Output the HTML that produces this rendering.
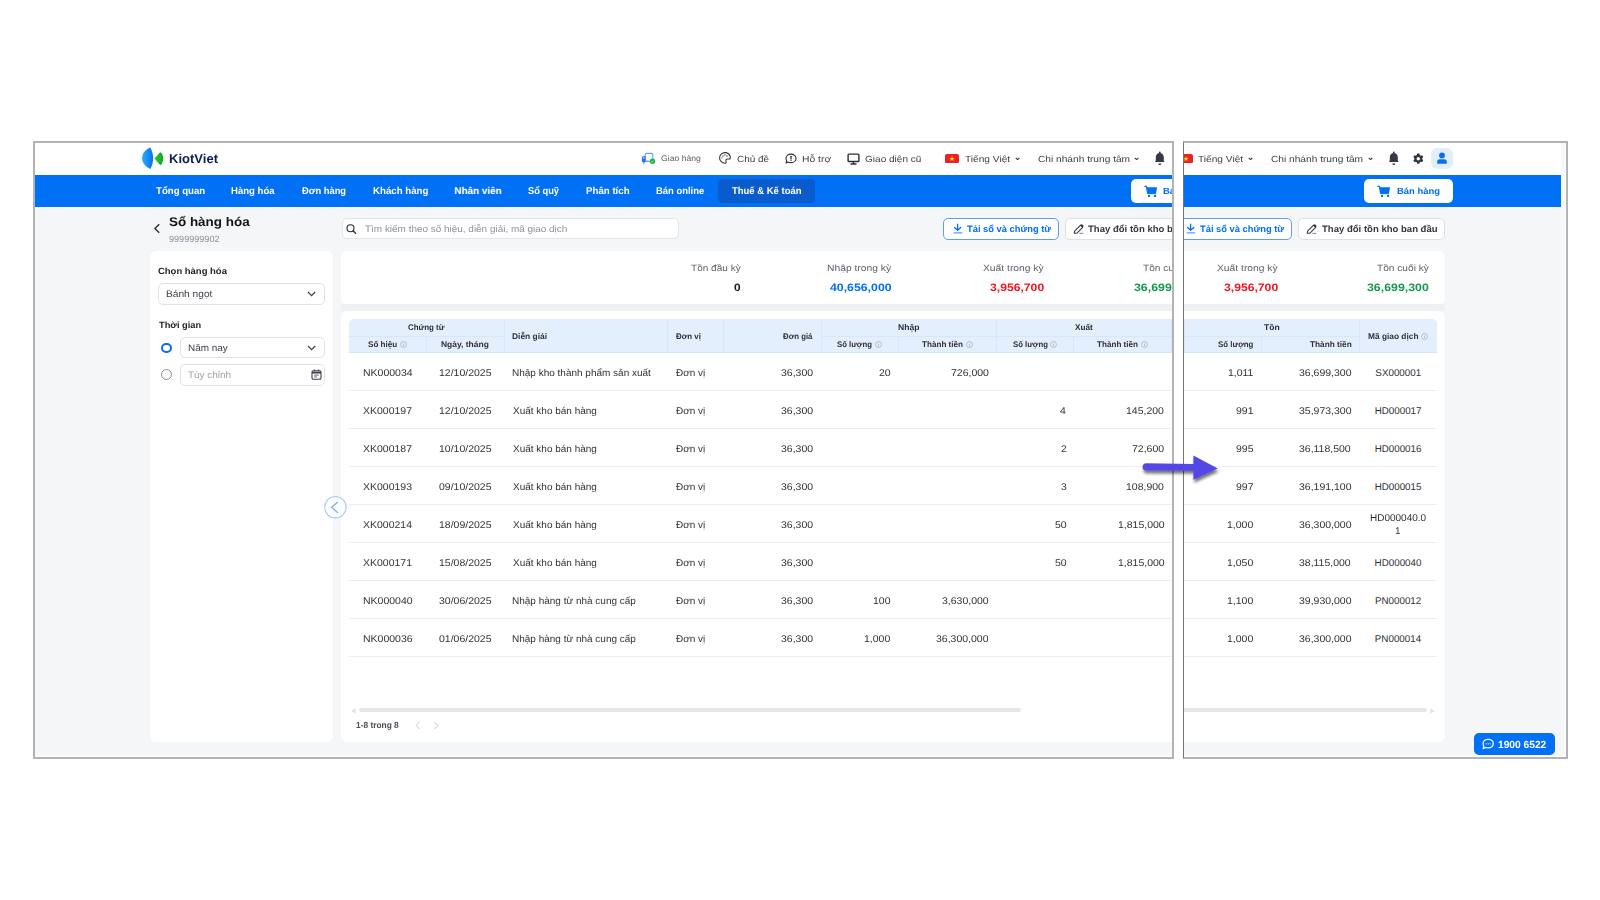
<!DOCTYPE html><html><head><meta charset="utf-8"><title>KiotViet</title><style>
*{margin:0;padding:0;box-sizing:content-box}
html,body{width:1600px;height:900px;overflow:hidden;background:#fff;font-family:"Liberation Sans", sans-serif;text-rendering:geometricPrecision}
.b{position:absolute}
.t{position:absolute;white-space:nowrap;transform-origin:0 0}
</style></head><body><div class="b" style="left:35px;top:143px;width:1137px;height:614px;overflow:hidden"><div class="b" style="left:-35px;top:-143px;width:1600px;height:900px"><div class="b" style="left:0.00px;top:143.00px;width:1340.00px;height:32.00px;background:#fff"></div><div class="b" style="left:0.00px;top:175.00px;width:1327.50px;height:32.00px;background:#0070f4"></div><div class="b" style="left:0.00px;top:207.00px;width:1340.00px;height:553.00px;background:#f5f6f8"></div><div class="b" style="left:1327.50px;top:143.00px;width:12.50px;height:617.00px;background:#f7f8fa"></div><svg class="b" style="left:136.00px;top:144.00px;" width="34" height="28" viewBox="0 0 34 28"><defs><linearGradient id="lgL" x1="0" y1="0" x2="1" y2="0"><stop offset="0" stop-color="#25b0f6"/><stop offset="1" stop-color="#0a6ff0"/></linearGradient><linearGradient id="lggL" x1="0" y1="0" x2="1" y2="0"><stop offset="0" stop-color="#2fd028"/><stop offset="1" stop-color="#0aa52c"/></linearGradient></defs><path d="M14.3 3.6 C9.2 5.6 6.1 9.8 6.1 14.3 C6.1 18.8 9.2 22.8 14.4 24.9 C16.4 21.2 17.1 17.8 17.1 14.3 C17.1 10.6 16.3 7.2 14.3 3.6 Z" fill="url(#lgL)"/><path d="M18.4 14.4 L23.6 8.7 Q24.6 7.7 25.5 8.9 C26.6 10.7 27.2 12.6 27.2 14.5 C27.2 16.5 26.6 18.5 25.5 20.3 Q24.6 21.5 23.6 20.4 Z" fill="url(#lggL)"/></svg><div class="t" style="left:169.15px;top:153.08px;font-size:12.9px;line-height:12.9px;color:#0c1f4f;font-weight:700;transform:scaleX(1.0111);">KiotViet</div><svg class="b" style="left:638.00px;top:150.00px;" width="22" height="18" viewBox="0 0 22 18"><rect x="7.2" y="3.4" width="7.6" height="8" rx="1.3" fill="none" stroke="#62a2f8" stroke-width="1.1"/><path d="M7.6 6.2H5.4C4.5 6.2 3.9 6.9 3.9 7.8V11.2C3.9 11.7 4.3 12 4.8 12H7.6Z" fill="#1f6ff2"/><rect x="4.9" y="7.2" width="1.6" height="1.4" fill="#b9d4fb"/><circle cx="5.8" cy="12.6" r="1.1" fill="#4f94f6"/><path d="M7.6 11.4H11" stroke="#62a2f8" stroke-width="1.1"/><circle cx="14.5" cy="11.3" r="2.7" fill="#1cb43c"/><path d="M13.4 11.4l0.8 0.8 1.4-1.5" stroke="#c8f0d0" stroke-width="0.8" fill="none"/></svg><div class="t" style="left:660.57px;top:154.56px;font-size:8.2px;line-height:8.2px;color:#5b6068;transform:scaleX(1.0569);">Giao hàng</div><svg class="b" style="left:718.60px;top:152.40px;" width="12" height="12" viewBox="0 0 12 12"><path d="M11 6.9 C11.4 5.9 11.3 4.8 11 4 C10.2 1.8 8.3 0.6 6 0.6 C3 0.6 0.6 3 0.6 5.9 C0.6 8.8 3 11.2 6 11.2 C6.9 11.2 7.3 10.6 7.1 9.9 L6.9 8.8 C6.8 7.8 7.3 6.9 8.3 6.9 Z" fill="none" stroke="#2b2f36" stroke-width="1.05" stroke-linejoin="round"/><circle cx="3.9" cy="4" r="0.65" fill="#2b2f36"/><circle cx="5.9" cy="2.9" r="0.65" fill="#2b2f36"/><circle cx="7.9" cy="4" r="0.65" fill="#2b2f36"/><circle cx="2.9" cy="5.8" r="0.55" fill="#2b2f36"/></svg><div class="t" style="left:736.50px;top:154.67px;font-size:8.9px;line-height:8.9px;color:#3a3f47;transform:scaleX(1.1218);">Chủ đề</div><svg class="b" style="left:784.60px;top:152.60px;" width="13" height="12" viewBox="0 0 13 12"><path d="M6 1.1 C8.9 1.1 11 3 11 5.4 C11 7.8 8.9 9.6 6 9.6 C5 9.6 4 9.4 3.2 9 L1 9.9 L1.7 7.8 C1.2 7.1 1 6.3 1 5.4 C1 3 3.1 1.1 6 1.1 Z" fill="none" stroke="#2b2f36" stroke-width="1.1" stroke-linejoin="round"/><path d="M6 3.3v2.5" stroke="#2b2f36" stroke-width="1.3" stroke-linecap="round"/><circle cx="6" cy="7.3" r="0.7" fill="#2b2f36"/></svg><div class="t" style="left:801.67px;top:154.67px;font-size:8.9px;line-height:8.9px;color:#3a3f47;transform:scaleX(1.1651);">Hỗ trợ</div><svg class="b" style="left:846.80px;top:152.60px;" width="13" height="12" viewBox="0 0 13 12"><rect x="1.1" y="1.1" width="10.8" height="7.4" rx="0.8" fill="none" stroke="#2b2f36" stroke-width="1.4"/><path d="M6.5 8.8v1.6M3.5 11h6" stroke="#2b2f36" stroke-width="1.4"/></svg><div class="t" style="left:865.10px;top:154.67px;font-size:8.9px;line-height:8.9px;color:#3a3f47;transform:scaleX(1.1318);">Giao diện cũ</div><svg class="b" style="left:945.00px;top:153.60px;" width="14" height="9.4" viewBox="0 0 14 9.4"><rect x="0" y="0" width="14" height="9.4" rx="2" fill="#e8222a"/><path d="M7 2.1l0.7 1.9h2l-1.6 1.2 0.6 1.9L7 6 5.3 7.1l0.6-1.9-1.6-1.2h2z" fill="#ffd400"/></svg><div class="t" style="left:964.80px;top:154.87px;font-size:8.9px;line-height:8.9px;color:#3a3f47;transform:scaleX(1.1439);">Tiếng Việt</div><svg class="b" style="left:1014.70px;top:156.80px;" width="5.2" height="3.6" viewBox="0 0 5.2 3.6"><path d="M0.8 0.8L2.6 2.6l1.8-1.8" fill="none" stroke="#3a3f47" stroke-width="1.2"/></svg><div class="t" style="left:1037.89px;top:154.87px;font-size:8.9px;line-height:8.9px;color:#3a3f47;transform:scaleX(1.1449);">Chi nhánh trung tâm</div><svg class="b" style="left:1134.00px;top:156.80px;" width="5.2" height="3.6" viewBox="0 0 5.2 3.6"><path d="M0.8 0.8L2.6 2.6l1.8-1.8" fill="none" stroke="#3a3f47" stroke-width="1.2"/></svg><svg class="b" style="left:1154.00px;top:151.00px;" width="12" height="15" viewBox="0 0 12 15"><circle cx="5.8" cy="1.4" r="0.9" fill="#353a42"/><path d="M0.9 11.1 L1.8 9.8 V6.3 C1.8 3.7 3.5 2 5.8 2 C8.1 2 9.8 3.7 9.8 6.3 V9.8 L10.7 11.1 Z" fill="#353a42"/><path d="M4.3 12.4 A1.5 1.5 0 0 0 7.3 12.4 Z" fill="#353a42"/></svg><svg class="b" style="left:1179.20px;top:152.60px;" width="11" height="11.5" viewBox="0 0 11 11.5"><path d="M3.84 2.08 L4.22 0.61 L6.38 0.61 L6.76 2.08 L7.70 2.63 L9.16 2.22 L10.25 4.09 L9.16 5.16 L9.16 6.24 L10.25 7.31 L9.16 9.18 L7.70 8.77 L6.76 9.32 L6.38 10.79 L4.22 10.79 L3.84 9.32 L2.90 8.77 L1.44 9.18 L0.35 7.31 L1.44 6.24 L1.44 5.16 L0.35 4.09 L1.44 2.22 L2.90 2.63 Z" fill="#2f333a"/><circle cx="5.3" cy="5.7" r="1.7" fill="#fff"/></svg><div class="b" style="left:1197.50px;top:147.50px;width:21.50px;height:21.25px;background:#e3eefd;border-radius:6px"></div><svg class="b" style="left:1203.60px;top:152.00px;" width="10" height="12" viewBox="0 0 10 12"><circle cx="5" cy="3.4" r="2.9" fill="#0a6cf5"/><path d="M0.2 11.8 V9.6 C0.2 8.2 1.2 7.3 2.6 7.3 H7.4 C8.8 7.3 9.8 8.2 9.8 9.6 V11.8 Z" fill="#0a6cf5"/></svg><div class="t" style="left:155.50px;top:186.52px;font-size:9.9px;line-height:9.9px;color:#fff;font-weight:700;transform:scaleX(0.9760);">Tổng quan</div><div class="t" style="left:231.28px;top:186.52px;font-size:9.9px;line-height:9.9px;color:#fff;font-weight:700;transform:scaleX(0.9675);">Hàng hóa</div><div class="t" style="left:302.45px;top:186.52px;font-size:9.9px;line-height:9.9px;color:#fff;font-weight:700;transform:scaleX(0.9470);">Đơn hàng</div><div class="t" style="left:373.12px;top:186.52px;font-size:9.9px;line-height:9.9px;color:#fff;font-weight:700;transform:scaleX(0.9803);">Khách hàng</div><div class="t" style="left:454.36px;top:186.52px;font-size:9.9px;line-height:9.9px;color:#fff;font-weight:700;">Nhân viên</div><div class="t" style="left:528.47px;top:186.52px;font-size:9.9px;line-height:9.9px;color:#fff;font-weight:700;transform:scaleX(0.9427);">Sổ quỹ</div><div class="t" style="left:586.37px;top:186.52px;font-size:9.9px;line-height:9.9px;color:#fff;font-weight:700;transform:scaleX(0.9812);">Phân tích</div><div class="t" style="left:656.39px;top:186.52px;font-size:9.9px;line-height:9.9px;color:#fff;font-weight:700;transform:scaleX(0.9547);">Bán online</div><div class="b" style="left:718.00px;top:178.75px;width:96.75px;height:24.00px;background:#0a5bcc;border-radius:4px"></div><div class="t" style="left:731.91px;top:186.52px;font-size:9.9px;line-height:9.9px;color:#fff;font-weight:700;transform:scaleX(0.9594);">Thuế &amp; Kế toán</div><div class="b" style="left:1130.70px;top:178.75px;width:88.55px;height:24.25px;background:#fff;border-radius:5px"></div><svg class="b" style="left:1143.50px;top:184.50px;" width="14" height="13" viewBox="0 0 14 13"><path d="M0.9 1.3 Q1.9 0.8 2.5 1.8 L3.7 8.4" fill="none" stroke="#0070f4" stroke-width="1.3" stroke-linecap="round"/><path d="M2.8 2.3 H12.9 V3.2 L12.1 8 H3.7 Z" fill="#0070f4"/><path d="M3.7 8.6 H12" stroke="#0070f4" stroke-width="1.1"/><circle cx="5" cy="10.9" r="1.2" fill="#0070f4"/><circle cx="11.1" cy="10.9" r="1.2" fill="#0070f4"/></svg><div class="t" style="left:1163.38px;top:187.27px;font-size:8.9px;line-height:8.9px;color:#0070f4;font-weight:700;transform:scaleX(1.0665);">Bán hàng</div><svg class="b" style="left:153.00px;top:222.50px;" width="8" height="11" viewBox="0 0 8 11"><path d="M6.2 1.2L1.9 5.5 6.2 9.8" fill="none" stroke="#2b2f36" stroke-width="1.4"/></svg><div class="t" style="left:168.90px;top:216.33px;font-size:12.6px;line-height:12.6px;color:#111418;font-weight:700;transform:scaleX(1.0670);">Sổ hàng hóa</div><div class="t" style="left:168.99px;top:234.78px;font-size:9.0px;line-height:9.0px;color:#8a8f97;transform:scaleX(1.0084);">9999999902</div><div class="b" style="left:341.50px;top:218.25px;width:337.25px;height:20.75px;background:#fff;border:1px solid #e1e4e8;border-radius:5px;box-sizing:border-box"></div><svg class="b" style="left:346.00px;top:224.00px;" width="11" height="10" viewBox="0 0 11 10"><circle cx="4.5" cy="4.2" r="3.5" fill="none" stroke="#2b2f36" stroke-width="1.15"/><path d="M7.1 6.8l2.5 2.5" stroke="#2b2f36" stroke-width="1.3" stroke-linecap="round"/></svg><div class="t" style="left:365.20px;top:224.14px;font-size:9.4px;line-height:9.4px;color:#8d929a;transform:scaleX(1.0607);">Tìm kiếm theo số hiệu, diễn giải, mã giao dịch</div><div class="b" style="left:943.20px;top:218.00px;width:115.80px;height:21.70px;background:#fff;border:1px solid #5c9ef7;border-radius:5px;box-sizing:border-box"></div><svg class="b" style="left:952.50px;top:223.00px;" width="10" height="11" viewBox="0 0 10 11"><path d="M4.6 1.2V7M1.6 4.4L4.6 7.2 7.8 4.4" fill="none" stroke="#0070f4" stroke-width="1.3" stroke-linecap="round" stroke-linejoin="round"/><path d="M1 9.8H8.8" stroke="#5d9cf6" stroke-width="1.2" stroke-linecap="round"/></svg><div class="t" style="left:966.61px;top:225.03px;font-size:9.3px;line-height:9.3px;color:#0070f4;font-weight:700;transform:scaleX(1.0041);">Tải sổ và chứng từ</div><div class="b" style="left:1064.60px;top:218.00px;width:146.80px;height:21.70px;background:#fff;border:1px solid #dde0e4;border-radius:5px;box-sizing:border-box"></div><svg class="b" style="left:1072.50px;top:223.50px;" width="11.5" height="10.5" viewBox="0 0 11.5 10.5"><path d="M1.2 9.3 L1.6 7.2 L7.6 1.2 L9.7 3.3 L3.7 9.3 Z" fill="none" stroke="#3a3f47" stroke-width="1.1" stroke-linejoin="round"/><path d="M7.4 1.4 L8.3 0.6 Q8.9 0.1 9.5 0.7 L10.3 1.5 Q10.8 2.1 10.2 2.7 L9.5 3.5 Z" fill="#2b3038"/><path d="M6.4 9.4 H10.4" stroke="#8a8f96" stroke-width="1.1"/></svg><div class="t" style="left:1088.20px;top:225.03px;font-size:9.3px;line-height:9.3px;color:#33373d;font-weight:700;transform:scaleX(1.0266);">Thay đổi tồn kho ban đầu</div><div class="b" style="left:150.00px;top:250.50px;width:182.50px;height:491.10px;background:#fff;border-radius:6px"></div><div class="t" style="left:158.02px;top:267.48px;font-size:9.0px;line-height:9.0px;color:#1c2026;font-weight:700;transform:scaleX(1.0521);">Chọn hàng hóa</div><div class="b" style="left:158.00px;top:283.00px;width:166.60px;height:21.50px;background:#fff;border:1px solid #dfe2e6;border-radius:5px;box-sizing:border-box"></div><div class="t" style="left:166.19px;top:290.07px;font-size:9.6px;line-height:9.6px;color:#3a3f47;transform:scaleX(1.0603);">Bánh ngọt</div><svg class="b" style="left:306.50px;top:290.50px;" width="9" height="6" viewBox="0 0 9 6"><path d="M1 1l3.6 3.6L8.2 1" fill="none" stroke="#3a3f47" stroke-width="1.2"/></svg><div class="t" style="left:158.66px;top:321.48px;font-size:9.0px;line-height:9.0px;color:#1c2026;font-weight:700;transform:scaleX(1.0304);">Thời gian</div><div class="b" style="left:161.00px;top:342.60px;width:10.80px;height:10.80px;border:2.6px solid #0a6cf2;border-radius:50%;box-sizing:border-box;background:#fff"></div><div class="b" style="left:180.25px;top:337.25px;width:144.35px;height:20.85px;background:#fff;border:1px solid #dfe2e6;border-radius:5px;box-sizing:border-box"></div><div class="t" style="left:187.95px;top:344.07px;font-size:9.6px;line-height:9.6px;color:#3a3f47;transform:scaleX(1.0364);">Năm nay</div><svg class="b" style="left:306.50px;top:344.80px;" width="9" height="6" viewBox="0 0 9 6"><path d="M1 1l3.6 3.6L8.2 1" fill="none" stroke="#3a3f47" stroke-width="1.2"/></svg><div class="b" style="left:161.00px;top:369.00px;width:11.00px;height:11.00px;border:1px solid #8a8f97;border-radius:50%;box-sizing:border-box;background:#fff"></div><div class="b" style="left:180.25px;top:364.40px;width:144.35px;height:21.20px;background:#fff;border:1px solid #dfe2e6;border-radius:5px;box-sizing:border-box"></div><div class="t" style="left:187.80px;top:371.17px;font-size:9.6px;line-height:9.6px;color:#9da2a9;transform:scaleX(1.0343);">Tùy chỉnh</div><svg class="b" style="left:310.50px;top:369.30px;" width="11" height="11" viewBox="0 0 11 11"><rect x="1" y="1.7" width="9" height="8.6" rx="1.3" fill="none" stroke="#3a3f47" stroke-width="1.1"/><path d="M1 3.6h9" stroke="#3a3f47" stroke-width="1.8"/><path d="M3.4 0.6v1.6M7.6 0.6v1.6" stroke="#3a3f47" stroke-width="1"/><path d="M3.2 6.1h4.6M3.2 7.9h2.6" stroke="#3a3f47" stroke-width="0.8"/></svg><div class="b" style="left:341.00px;top:250.50px;width:870.30px;height:53.70px;background:#fff;border-radius:6px"></div><div class="t" style="left:690.50px;top:263.60px;font-size:9.1px;line-height:9.1px;color:#5d626a;transform:scaleX(1.1045);">Tồn đầu kỳ</div><div class="t" style="left:734.08px;top:282.86px;font-size:10.8px;line-height:10.8px;color:#15181d;font-weight:700;transform:scaleX(1.1000);">0</div><div class="t" style="left:827.38px;top:263.60px;font-size:9.1px;line-height:9.1px;color:#5d626a;transform:scaleX(1.1320);">Nhập trong kỳ</div><div class="t" style="left:830.42px;top:282.86px;font-size:10.8px;line-height:10.8px;color:#0070f4;font-weight:700;transform:scaleX(1.1392);">40,656,000</div><div class="t" style="left:983.04px;top:263.60px;font-size:9.1px;line-height:9.1px;color:#5d626a;transform:scaleX(1.1317);">Xuất trong kỳ</div><div class="t" style="left:990.00px;top:282.86px;font-size:10.8px;line-height:10.8px;color:#f5121f;font-weight:700;transform:scaleX(1.1276);">3,956,700</div><div class="t" style="left:1143.30px;top:263.60px;font-size:9.1px;line-height:9.1px;color:#5d626a;transform:scaleX(1.1151);">Tồn cuối kỳ</div><div class="t" style="left:1133.89px;top:282.86px;font-size:10.8px;line-height:10.8px;color:#13994a;font-weight:700;transform:scaleX(1.1433);">36,699,300</div><div class="b" style="left:341.00px;top:304.20px;width:870.30px;height:7.05px;background:#eff0f2"></div><div class="b" style="left:341.00px;top:311.25px;width:870.30px;height:430.35px;background:#fff;border-radius:6px"></div><div class="b" style="left:349px;top:311px;width:854.5px;height:380px;overflow:hidden"><div class="b" style="left:-349px;top:-311px;width:2000px;height:900px"><div class="b" style="left:349.00px;top:319.20px;width:1075.50px;height:33.40px;background:#e3effd;border-radius:5px 5px 0 0"></div><div class="b" style="left:349.00px;top:351.90px;width:1075.50px;height:1.00px;background:#d3e4fb"></div><div class="b" style="left:349.00px;top:335.80px;width:155.40px;height:0.80px;background:#d6e6fb"></div><div class="b" style="left:821.20px;top:335.80px;width:175.40px;height:0.80px;background:#d6e6fb"></div><div class="b" style="left:996.60px;top:335.80px;width:174.90px;height:0.80px;background:#d6e6fb"></div><div class="b" style="left:1171.50px;top:335.80px;width:175.50px;height:0.80px;background:#d6e6fb"></div><div class="b" style="left:504.00px;top:319.20px;width:0.80px;height:33.40px;background:#d6e6fb"></div><div class="b" style="left:667.10px;top:319.20px;width:0.80px;height:33.40px;background:#d6e6fb"></div><div class="b" style="left:723.10px;top:319.20px;width:0.80px;height:33.40px;background:#d6e6fb"></div><div class="b" style="left:820.80px;top:319.20px;width:0.80px;height:33.40px;background:#d6e6fb"></div><div class="b" style="left:996.20px;top:319.20px;width:0.80px;height:33.40px;background:#d6e6fb"></div><div class="b" style="left:1171.10px;top:319.20px;width:0.80px;height:33.40px;background:#d6e6fb"></div><div class="b" style="left:1346.60px;top:319.20px;width:0.80px;height:33.40px;background:#d6e6fb"></div><div class="b" style="left:425.85px;top:336.00px;width:0.80px;height:16.60px;background:#d6e6fb"></div><div class="b" style="left:897.90px;top:336.00px;width:0.80px;height:16.60px;background:#d6e6fb"></div><div class="b" style="left:1073.00px;top:336.00px;width:0.80px;height:16.60px;background:#d6e6fb"></div><div class="b" style="left:1248.50px;top:336.00px;width:0.80px;height:16.60px;background:#d6e6fb"></div><div class="t" style="left:408.28px;top:324.26px;font-size:8.2px;line-height:8.2px;color:#2c3037;font-weight:700;transform:scaleX(0.9649);">Chứng từ</div><div class="t" style="left:368.13px;top:341.26px;font-size:8.2px;line-height:8.2px;color:#2c3037;font-weight:700;transform:scaleX(0.9888);">Số hiệu</div><svg class="b" style="left:399.88px;top:341.10px;" width="7" height="7" viewBox="0 0 7 7"><circle cx="3.5" cy="3.5" r="3" fill="none" stroke="#a9adb3" stroke-width="0.75"/><path d="M3.5 3.1v2.1" stroke="#a9adb3" stroke-width="0.8"/><circle cx="3.5" cy="2" r="0.45" fill="#a9adb3"/></svg><div class="t" style="left:441.37px;top:341.26px;font-size:8.2px;line-height:8.2px;color:#2c3037;font-weight:700;transform:scaleX(1.0339);">Ngày, tháng</div><div class="t" style="left:512.25px;top:333.16px;font-size:8.2px;line-height:8.2px;color:#2c3037;font-weight:700;transform:scaleX(1.0276);">Diễn giải</div><div class="t" style="left:675.56px;top:333.16px;font-size:8.2px;line-height:8.2px;color:#2c3037;font-weight:700;transform:scaleX(0.9645);">Đơn vị</div><div class="t" style="left:782.96px;top:333.16px;font-size:8.2px;line-height:8.2px;color:#2c3037;font-weight:700;transform:scaleX(0.9555);">Đơn giá</div><div class="t" style="left:898.04px;top:324.26px;font-size:8.2px;line-height:8.2px;color:#2c3037;font-weight:700;transform:scaleX(1.0489);">Nhập</div><div class="t" style="left:837.42px;top:341.26px;font-size:8.2px;line-height:8.2px;color:#2c3037;font-weight:700;transform:scaleX(0.9490);">Số lượng</div><svg class="b" style="left:874.85px;top:341.10px;" width="7" height="7" viewBox="0 0 7 7"><circle cx="3.5" cy="3.5" r="3" fill="none" stroke="#a9adb3" stroke-width="0.75"/><path d="M3.5 3.1v2.1" stroke="#a9adb3" stroke-width="0.8"/><circle cx="3.5" cy="2" r="0.45" fill="#a9adb3"/></svg><div class="t" style="left:922.12px;top:341.26px;font-size:8.2px;line-height:8.2px;color:#2c3037;font-weight:700;transform:scaleX(0.9908);">Thành tiền</div><svg class="b" style="left:965.70px;top:341.10px;" width="7" height="7" viewBox="0 0 7 7"><circle cx="3.5" cy="3.5" r="3" fill="none" stroke="#a9adb3" stroke-width="0.75"/><path d="M3.5 3.1v2.1" stroke="#a9adb3" stroke-width="0.8"/><circle cx="3.5" cy="2" r="0.45" fill="#a9adb3"/></svg><div class="t" style="left:1075.12px;top:324.26px;font-size:8.2px;line-height:8.2px;color:#2c3037;font-weight:700;transform:scaleX(1.0063);">Xuất</div><div class="t" style="left:1012.67px;top:341.26px;font-size:8.2px;line-height:8.2px;color:#2c3037;font-weight:700;transform:scaleX(0.9490);">Số lượng</div><svg class="b" style="left:1050.10px;top:341.10px;" width="7" height="7" viewBox="0 0 7 7"><circle cx="3.5" cy="3.5" r="3" fill="none" stroke="#a9adb3" stroke-width="0.75"/><path d="M3.5 3.1v2.1" stroke="#a9adb3" stroke-width="0.8"/><circle cx="3.5" cy="2" r="0.45" fill="#a9adb3"/></svg><div class="t" style="left:1097.12px;top:341.26px;font-size:8.2px;line-height:8.2px;color:#2c3037;font-weight:700;transform:scaleX(0.9908);">Thành tiền</div><svg class="b" style="left:1140.70px;top:341.10px;" width="7" height="7" viewBox="0 0 7 7"><circle cx="3.5" cy="3.5" r="3" fill="none" stroke="#a9adb3" stroke-width="0.75"/><path d="M3.5 3.1v2.1" stroke="#a9adb3" stroke-width="0.8"/><circle cx="3.5" cy="2" r="0.45" fill="#a9adb3"/></svg><div class="t" style="left:1251.61px;top:324.26px;font-size:8.2px;line-height:8.2px;color:#2c3037;font-weight:700;transform:scaleX(1.0463);">Tồn</div><div class="t" style="left:1205.26px;top:341.26px;font-size:8.2px;line-height:8.2px;color:#2c3037;font-weight:700;transform:scaleX(0.9628);">Số lượng</div><div class="t" style="left:1297.02px;top:341.26px;font-size:8.2px;line-height:8.2px;color:#2c3037;font-weight:700;transform:scaleX(1.0079);">Thành tiền</div><div class="t" style="left:1355.46px;top:333.16px;font-size:8.2px;line-height:8.2px;color:#2c3037;font-weight:700;transform:scaleX(1.0180);">Mã giao dịch</div><svg class="b" style="left:1408.50px;top:333.00px;" width="7" height="7" viewBox="0 0 7 7"><circle cx="3.5" cy="3.5" r="3" fill="none" stroke="#a9adb3" stroke-width="0.75"/><path d="M3.5 3.1v2.1" stroke="#a9adb3" stroke-width="0.8"/><circle cx="3.5" cy="2" r="0.45" fill="#a9adb3"/></svg><div class="t" style="left:362.56px;top:368.50px;font-size:9.8px;line-height:9.8px;color:#2e3238;transform:scaleX(1.0700);">NK000034</div><div class="t" style="left:438.90px;top:368.50px;font-size:9.8px;line-height:9.8px;color:#2e3238;transform:scaleX(1.0700);">12/10/2025</div><div class="t" style="left:512.30px;top:368.50px;font-size:9.8px;line-height:9.8px;color:#2e3238;transform:scaleX(1.0200);">Nhập kho thành phẩm sản xuất</div><div class="t" style="left:675.55px;top:368.50px;font-size:9.8px;line-height:9.8px;color:#2e3238;transform:scaleX(1.0200);">Đơn vị</div><div class="t" style="left:781.48px;top:368.50px;font-size:9.8px;line-height:9.8px;color:#2e3238;transform:scaleX(1.0700);">36,300</div><div class="t" style="left:878.93px;top:368.50px;font-size:9.8px;line-height:9.8px;color:#2e3238;transform:scaleX(1.0700);">20</div><div class="t" style="left:950.96px;top:368.50px;font-size:9.8px;line-height:9.8px;color:#2e3238;transform:scaleX(1.0700);">726,000</div><div class="t" style="left:1215.24px;top:368.50px;font-size:9.8px;line-height:9.8px;color:#2e3238;transform:scaleX(1.0700);">1,011</div><div class="t" style="left:1286.18px;top:368.50px;font-size:9.8px;line-height:9.8px;color:#2e3238;transform:scaleX(1.0700);">36,699,300</div><div class="t" style="left:1362.87px;top:368.50px;font-size:9.8px;line-height:9.8px;color:#2e3238;">SX000001</div><div class="b" style="left:349.00px;top:390.40px;width:1075.50px;height:1.00px;background:#eceef1"></div><div class="t" style="left:363.27px;top:406.50px;font-size:9.8px;line-height:9.8px;color:#2e3238;transform:scaleX(1.0700);">XK000197</div><div class="t" style="left:438.90px;top:406.50px;font-size:9.8px;line-height:9.8px;color:#2e3238;transform:scaleX(1.0700);">12/10/2025</div><div class="t" style="left:512.85px;top:406.50px;font-size:9.8px;line-height:9.8px;color:#2e3238;transform:scaleX(1.0200);">Xuất kho bán hàng</div><div class="t" style="left:675.55px;top:406.50px;font-size:9.8px;line-height:9.8px;color:#2e3238;transform:scaleX(1.0200);">Đơn vị</div><div class="t" style="left:781.48px;top:406.50px;font-size:9.8px;line-height:9.8px;color:#2e3238;transform:scaleX(1.0700);">36,300</div><div class="t" style="left:1060.44px;top:406.50px;font-size:9.8px;line-height:9.8px;color:#2e3238;transform:scaleX(1.0700);">4</div><div class="t" style="left:1126.46px;top:406.50px;font-size:9.8px;line-height:9.8px;color:#2e3238;transform:scaleX(1.0700);">145,200</div><div class="t" style="left:1223.21px;top:406.50px;font-size:9.8px;line-height:9.8px;color:#2e3238;transform:scaleX(1.0700);">991</div><div class="t" style="left:1286.18px;top:406.50px;font-size:9.8px;line-height:9.8px;color:#2e3238;transform:scaleX(1.0700);">35,973,300</div><div class="t" style="left:1362.18px;top:406.50px;font-size:9.8px;line-height:9.8px;color:#2e3238;">HD000017</div><div class="b" style="left:349.00px;top:428.40px;width:1075.50px;height:1.00px;background:#eceef1"></div><div class="t" style="left:363.27px;top:444.50px;font-size:9.8px;line-height:9.8px;color:#2e3238;transform:scaleX(1.0700);">XK000187</div><div class="t" style="left:438.90px;top:444.50px;font-size:9.8px;line-height:9.8px;color:#2e3238;transform:scaleX(1.0700);">10/10/2025</div><div class="t" style="left:512.85px;top:444.50px;font-size:9.8px;line-height:9.8px;color:#2e3238;transform:scaleX(1.0200);">Xuất kho bán hàng</div><div class="t" style="left:675.55px;top:444.50px;font-size:9.8px;line-height:9.8px;color:#2e3238;transform:scaleX(1.0200);">Đơn vị</div><div class="t" style="left:781.48px;top:444.50px;font-size:9.8px;line-height:9.8px;color:#2e3238;transform:scaleX(1.0700);">36,300</div><div class="t" style="left:1060.70px;top:444.50px;font-size:9.8px;line-height:9.8px;color:#2e3238;transform:scaleX(1.0700);">2</div><div class="t" style="left:1132.28px;top:444.50px;font-size:9.8px;line-height:9.8px;color:#2e3238;transform:scaleX(1.0700);">72,600</div><div class="t" style="left:1223.16px;top:444.50px;font-size:9.8px;line-height:9.8px;color:#2e3238;transform:scaleX(1.0700);">995</div><div class="t" style="left:1286.97px;top:444.50px;font-size:9.8px;line-height:9.8px;color:#2e3238;transform:scaleX(1.0700);">36,118,500</div><div class="t" style="left:1362.13px;top:444.50px;font-size:9.8px;line-height:9.8px;color:#2e3238;">HD000016</div><div class="b" style="left:349.00px;top:466.40px;width:1075.50px;height:1.00px;background:#eceef1"></div><div class="t" style="left:363.22px;top:482.50px;font-size:9.8px;line-height:9.8px;color:#2e3238;transform:scaleX(1.0700);">XK000193</div><div class="t" style="left:439.08px;top:482.50px;font-size:9.8px;line-height:9.8px;color:#2e3238;transform:scaleX(1.0700);">09/10/2025</div><div class="t" style="left:512.85px;top:482.50px;font-size:9.8px;line-height:9.8px;color:#2e3238;transform:scaleX(1.0200);">Xuất kho bán hàng</div><div class="t" style="left:675.55px;top:482.50px;font-size:9.8px;line-height:9.8px;color:#2e3238;transform:scaleX(1.0200);">Đơn vị</div><div class="t" style="left:781.48px;top:482.50px;font-size:9.8px;line-height:9.8px;color:#2e3238;transform:scaleX(1.0700);">36,300</div><div class="t" style="left:1060.60px;top:482.50px;font-size:9.8px;line-height:9.8px;color:#2e3238;transform:scaleX(1.0700);">3</div><div class="t" style="left:1126.46px;top:482.50px;font-size:9.8px;line-height:9.8px;color:#2e3238;transform:scaleX(1.0700);">108,900</div><div class="t" style="left:1223.27px;top:482.50px;font-size:9.8px;line-height:9.8px;color:#2e3238;transform:scaleX(1.0700);">997</div><div class="t" style="left:1286.18px;top:482.50px;font-size:9.8px;line-height:9.8px;color:#2e3238;transform:scaleX(1.0700);">36,191,100</div><div class="t" style="left:1362.13px;top:482.50px;font-size:9.8px;line-height:9.8px;color:#2e3238;">HD000015</div><div class="b" style="left:349.00px;top:504.40px;width:1075.50px;height:1.00px;background:#eceef1"></div><div class="t" style="left:363.14px;top:520.50px;font-size:9.8px;line-height:9.8px;color:#2e3238;transform:scaleX(1.0700);">XK000214</div><div class="t" style="left:438.90px;top:520.50px;font-size:9.8px;line-height:9.8px;color:#2e3238;transform:scaleX(1.0700);">18/09/2025</div><div class="t" style="left:512.85px;top:520.50px;font-size:9.8px;line-height:9.8px;color:#2e3238;transform:scaleX(1.0200);">Xuất kho bán hàng</div><div class="t" style="left:675.55px;top:520.50px;font-size:9.8px;line-height:9.8px;color:#2e3238;transform:scaleX(1.0200);">Đơn vị</div><div class="t" style="left:781.48px;top:520.50px;font-size:9.8px;line-height:9.8px;color:#2e3238;transform:scaleX(1.0700);">36,300</div><div class="t" style="left:1054.73px;top:520.50px;font-size:9.8px;line-height:9.8px;color:#2e3238;transform:scaleX(1.0700);">50</div><div class="t" style="left:1117.70px;top:520.50px;font-size:9.8px;line-height:9.8px;color:#2e3238;transform:scaleX(1.0700);">1,815,000</div><div class="t" style="left:1214.35px;top:520.50px;font-size:9.8px;line-height:9.8px;color:#2e3238;transform:scaleX(1.0700);">1,000</div><div class="t" style="left:1286.18px;top:520.50px;font-size:9.8px;line-height:9.8px;color:#2e3238;transform:scaleX(1.0700);">36,300,000</div><div class="t" style="left:1357.46px;top:513.70px;font-size:9.8px;line-height:9.8px;color:#2e3238;transform:scaleX(1.0200);">HD000040.0</div><div class="t" style="left:1382.83px;top:526.50px;font-size:9.8px;line-height:9.8px;color:#2e3238;transform:scaleX(1.0200);">1</div><div class="b" style="left:349.00px;top:542.40px;width:1075.50px;height:1.00px;background:#eceef1"></div><div class="t" style="left:363.25px;top:558.50px;font-size:9.8px;line-height:9.8px;color:#2e3238;transform:scaleX(1.0700);">XK000171</div><div class="t" style="left:438.90px;top:558.50px;font-size:9.8px;line-height:9.8px;color:#2e3238;transform:scaleX(1.0700);">15/08/2025</div><div class="t" style="left:512.85px;top:558.50px;font-size:9.8px;line-height:9.8px;color:#2e3238;transform:scaleX(1.0200);">Xuất kho bán hàng</div><div class="t" style="left:675.55px;top:558.50px;font-size:9.8px;line-height:9.8px;color:#2e3238;transform:scaleX(1.0200);">Đơn vị</div><div class="t" style="left:781.48px;top:558.50px;font-size:9.8px;line-height:9.8px;color:#2e3238;transform:scaleX(1.0700);">36,300</div><div class="t" style="left:1054.73px;top:558.50px;font-size:9.8px;line-height:9.8px;color:#2e3238;transform:scaleX(1.0700);">50</div><div class="t" style="left:1117.70px;top:558.50px;font-size:9.8px;line-height:9.8px;color:#2e3238;transform:scaleX(1.0700);">1,815,000</div><div class="t" style="left:1214.35px;top:558.50px;font-size:9.8px;line-height:9.8px;color:#2e3238;transform:scaleX(1.0700);">1,050</div><div class="t" style="left:1286.97px;top:558.50px;font-size:9.8px;line-height:9.8px;color:#2e3238;transform:scaleX(1.0700);">38,115,000</div><div class="t" style="left:1362.11px;top:558.50px;font-size:9.8px;line-height:9.8px;color:#2e3238;">HD000040</div><div class="b" style="left:349.00px;top:580.40px;width:1075.50px;height:1.00px;background:#eceef1"></div><div class="t" style="left:362.62px;top:596.50px;font-size:9.8px;line-height:9.8px;color:#2e3238;transform:scaleX(1.0700);">NK000040</div><div class="t" style="left:439.08px;top:596.50px;font-size:9.8px;line-height:9.8px;color:#2e3238;transform:scaleX(1.0700);">30/06/2025</div><div class="t" style="left:512.30px;top:596.50px;font-size:9.8px;line-height:9.8px;color:#2e3238;transform:scaleX(1.0200);">Nhập hàng từ nhà cung cấp</div><div class="t" style="left:675.55px;top:596.50px;font-size:9.8px;line-height:9.8px;color:#2e3238;transform:scaleX(1.0200);">Đơn vị</div><div class="t" style="left:781.48px;top:596.50px;font-size:9.8px;line-height:9.8px;color:#2e3238;transform:scaleX(1.0700);">36,300</div><div class="t" style="left:873.11px;top:596.50px;font-size:9.8px;line-height:9.8px;color:#2e3238;transform:scaleX(1.0700);">100</div><div class="t" style="left:942.20px;top:596.50px;font-size:9.8px;line-height:9.8px;color:#2e3238;transform:scaleX(1.0700);">3,630,000</div><div class="t" style="left:1214.35px;top:596.50px;font-size:9.8px;line-height:9.8px;color:#2e3238;transform:scaleX(1.0700);">1,100</div><div class="t" style="left:1286.18px;top:596.50px;font-size:9.8px;line-height:9.8px;color:#2e3238;transform:scaleX(1.0700);">39,930,000</div><div class="t" style="left:1362.45px;top:596.50px;font-size:9.8px;line-height:9.8px;color:#2e3238;">PN000012</div><div class="b" style="left:349.00px;top:618.40px;width:1075.50px;height:1.00px;background:#eceef1"></div><div class="t" style="left:362.64px;top:634.50px;font-size:9.8px;line-height:9.8px;color:#2e3238;transform:scaleX(1.0700);">NK000036</div><div class="t" style="left:439.08px;top:634.50px;font-size:9.8px;line-height:9.8px;color:#2e3238;transform:scaleX(1.0700);">01/06/2025</div><div class="t" style="left:512.30px;top:634.50px;font-size:9.8px;line-height:9.8px;color:#2e3238;transform:scaleX(1.0200);">Nhập hàng từ nhà cung cấp</div><div class="t" style="left:675.55px;top:634.50px;font-size:9.8px;line-height:9.8px;color:#2e3238;transform:scaleX(1.0200);">Đơn vị</div><div class="t" style="left:781.48px;top:634.50px;font-size:9.8px;line-height:9.8px;color:#2e3238;transform:scaleX(1.0700);">36,300</div><div class="t" style="left:864.35px;top:634.50px;font-size:9.8px;line-height:9.8px;color:#2e3238;transform:scaleX(1.0700);">1,000</div><div class="t" style="left:936.38px;top:634.50px;font-size:9.8px;line-height:9.8px;color:#2e3238;transform:scaleX(1.0700);">36,300,000</div><div class="t" style="left:1214.35px;top:634.50px;font-size:9.8px;line-height:9.8px;color:#2e3238;transform:scaleX(1.0700);">1,000</div><div class="t" style="left:1286.18px;top:634.50px;font-size:9.8px;line-height:9.8px;color:#2e3238;transform:scaleX(1.0700);">36,300,000</div><div class="t" style="left:1362.33px;top:634.50px;font-size:9.8px;line-height:9.8px;color:#2e3238;">PN000014</div><div class="b" style="left:349.00px;top:656.40px;width:1075.50px;height:1.00px;background:#eceef1"></div></div></div><svg class="b" style="left:351.00px;top:707.60px;" width="5" height="6" viewBox="0 0 5 6"><path d="M4.6 0.3v5.4L0.3 3z" fill="#dfe2e6"/></svg><svg class="b" style="left:1196.50px;top:707.60px;" width="5" height="6" viewBox="0 0 5 6"><path d="M0.4 0.3v5.4L4.7 3z" fill="#dfe2e6"/></svg><div class="b" style="left:359.00px;top:708.00px;width:662.00px;height:4.40px;background:#e4e6ea;border-radius:2.2px"></div><div class="t" style="left:355.50px;top:720.95px;font-size:8.8px;line-height:8.8px;color:#4a4f57;font-weight:700;transform:scaleX(0.9507);">1-8 trong 8</div><svg class="b" style="left:415.00px;top:720.50px;" width="6" height="9" viewBox="0 0 6 9"><path d="M4.5 1L1.2 4.5 4.5 8" fill="none" stroke="#c3c7cd" stroke-width="1"/></svg><svg class="b" style="left:432.60px;top:720.50px;" width="6" height="9" viewBox="0 0 6 9"><path d="M1.5 1l3.3 3.5L1.5 8" fill="none" stroke="#c3c7cd" stroke-width="1"/></svg><svg class="b" style="left:324.00px;top:495.50px;" width="23" height="23" viewBox="0 0 23 23"><circle cx="11.4" cy="11.2" r="10.7" fill="#fff" fill-opacity="0.55" stroke="#a6cbfa" stroke-width="1.1"/><path d="M13.8 6L7.6 11.3 13.8 16.7" fill="none" stroke="#79b0f8" stroke-width="1.3"/></svg><div class="b" style="left:1240.50px;top:733.20px;width:81.00px;height:21.60px;background:#0070f4;border-radius:5px"></div><svg class="b" style="left:1248.50px;top:738.00px;" width="12" height="12" viewBox="0 0 12 12"><path d="M6.2 1.3 C9.1 1.3 11.3 3.2 11.3 5.6 C11.3 8 9.1 9.9 6.2 9.9 C5.4 9.9 4.6 9.8 3.9 9.5 L1.1 10.6 L1.9 8.3 C1.3 7.6 1.1 6.6 1.1 5.6 C1.1 3.2 3.3 1.3 6.2 1.3 Z" fill="none" stroke="#fff" stroke-width="1.25" stroke-linejoin="round"/><circle cx="4.2" cy="5.8" r="0.65" fill="#fff"/><circle cx="6.2" cy="5.8" r="0.65" fill="#fff"/><circle cx="8.2" cy="5.8" r="0.65" fill="#fff"/></svg><div class="t" style="left:1264.39px;top:741.20px;font-size:10.4px;line-height:10.4px;color:#fff;font-weight:700;transform:scaleX(0.9834);">1900 6522</div></div></div><div class="b" style="left:35px;top:755.7px;width:1137px;height:1.3px;background:#fff"></div><div class="b" style="left:33px;top:141px;width:1137px;height:614px;border:2px solid #b3b3b3"></div><div class="b" style="left:1184px;top:143px;width:381px;height:614px;overflow:hidden"><div class="b" style="left:-950.5px;top:-143px;width:1600px;height:900px"><div class="b" style="left:0.00px;top:143.00px;width:1340.00px;height:32.00px;background:#fff"></div><div class="b" style="left:0.00px;top:175.00px;width:1327.50px;height:32.00px;background:#0070f4"></div><div class="b" style="left:0.00px;top:207.00px;width:1340.00px;height:553.00px;background:#f5f6f8"></div><div class="b" style="left:1327.50px;top:143.00px;width:12.50px;height:617.00px;background:#f7f8fa"></div><svg class="b" style="left:136.00px;top:144.00px;" width="34" height="28" viewBox="0 0 34 28"><defs><linearGradient id="lgR" x1="0" y1="0" x2="1" y2="0"><stop offset="0" stop-color="#25b0f6"/><stop offset="1" stop-color="#0a6ff0"/></linearGradient><linearGradient id="lggR" x1="0" y1="0" x2="1" y2="0"><stop offset="0" stop-color="#2fd028"/><stop offset="1" stop-color="#0aa52c"/></linearGradient></defs><path d="M14.3 3.6 C9.2 5.6 6.1 9.8 6.1 14.3 C6.1 18.8 9.2 22.8 14.4 24.9 C16.4 21.2 17.1 17.8 17.1 14.3 C17.1 10.6 16.3 7.2 14.3 3.6 Z" fill="url(#lgR)"/><path d="M18.4 14.4 L23.6 8.7 Q24.6 7.7 25.5 8.9 C26.6 10.7 27.2 12.6 27.2 14.5 C27.2 16.5 26.6 18.5 25.5 20.3 Q24.6 21.5 23.6 20.4 Z" fill="url(#lggR)"/></svg><div class="t" style="left:169.15px;top:153.08px;font-size:12.9px;line-height:12.9px;color:#0c1f4f;font-weight:700;transform:scaleX(1.0111);">KiotViet</div><svg class="b" style="left:638.00px;top:150.00px;" width="22" height="18" viewBox="0 0 22 18"><rect x="7.2" y="3.4" width="7.6" height="8" rx="1.3" fill="none" stroke="#62a2f8" stroke-width="1.1"/><path d="M7.6 6.2H5.4C4.5 6.2 3.9 6.9 3.9 7.8V11.2C3.9 11.7 4.3 12 4.8 12H7.6Z" fill="#1f6ff2"/><rect x="4.9" y="7.2" width="1.6" height="1.4" fill="#b9d4fb"/><circle cx="5.8" cy="12.6" r="1.1" fill="#4f94f6"/><path d="M7.6 11.4H11" stroke="#62a2f8" stroke-width="1.1"/><circle cx="14.5" cy="11.3" r="2.7" fill="#1cb43c"/><path d="M13.4 11.4l0.8 0.8 1.4-1.5" stroke="#c8f0d0" stroke-width="0.8" fill="none"/></svg><div class="t" style="left:660.57px;top:154.56px;font-size:8.2px;line-height:8.2px;color:#5b6068;transform:scaleX(1.0569);">Giao hàng</div><svg class="b" style="left:718.60px;top:152.40px;" width="12" height="12" viewBox="0 0 12 12"><path d="M11 6.9 C11.4 5.9 11.3 4.8 11 4 C10.2 1.8 8.3 0.6 6 0.6 C3 0.6 0.6 3 0.6 5.9 C0.6 8.8 3 11.2 6 11.2 C6.9 11.2 7.3 10.6 7.1 9.9 L6.9 8.8 C6.8 7.8 7.3 6.9 8.3 6.9 Z" fill="none" stroke="#2b2f36" stroke-width="1.05" stroke-linejoin="round"/><circle cx="3.9" cy="4" r="0.65" fill="#2b2f36"/><circle cx="5.9" cy="2.9" r="0.65" fill="#2b2f36"/><circle cx="7.9" cy="4" r="0.65" fill="#2b2f36"/><circle cx="2.9" cy="5.8" r="0.55" fill="#2b2f36"/></svg><div class="t" style="left:736.50px;top:154.67px;font-size:8.9px;line-height:8.9px;color:#3a3f47;transform:scaleX(1.1218);">Chủ đề</div><svg class="b" style="left:784.60px;top:152.60px;" width="13" height="12" viewBox="0 0 13 12"><path d="M6 1.1 C8.9 1.1 11 3 11 5.4 C11 7.8 8.9 9.6 6 9.6 C5 9.6 4 9.4 3.2 9 L1 9.9 L1.7 7.8 C1.2 7.1 1 6.3 1 5.4 C1 3 3.1 1.1 6 1.1 Z" fill="none" stroke="#2b2f36" stroke-width="1.1" stroke-linejoin="round"/><path d="M6 3.3v2.5" stroke="#2b2f36" stroke-width="1.3" stroke-linecap="round"/><circle cx="6" cy="7.3" r="0.7" fill="#2b2f36"/></svg><div class="t" style="left:801.67px;top:154.67px;font-size:8.9px;line-height:8.9px;color:#3a3f47;transform:scaleX(1.1651);">Hỗ trợ</div><svg class="b" style="left:846.80px;top:152.60px;" width="13" height="12" viewBox="0 0 13 12"><rect x="1.1" y="1.1" width="10.8" height="7.4" rx="0.8" fill="none" stroke="#2b2f36" stroke-width="1.4"/><path d="M6.5 8.8v1.6M3.5 11h6" stroke="#2b2f36" stroke-width="1.4"/></svg><div class="t" style="left:865.10px;top:154.67px;font-size:8.9px;line-height:8.9px;color:#3a3f47;transform:scaleX(1.1318);">Giao diện cũ</div><svg class="b" style="left:945.00px;top:153.60px;" width="14" height="9.4" viewBox="0 0 14 9.4"><rect x="0" y="0" width="14" height="9.4" rx="2" fill="#e8222a"/><path d="M7 2.1l0.7 1.9h2l-1.6 1.2 0.6 1.9L7 6 5.3 7.1l0.6-1.9-1.6-1.2h2z" fill="#ffd400"/></svg><div class="t" style="left:964.80px;top:154.87px;font-size:8.9px;line-height:8.9px;color:#3a3f47;transform:scaleX(1.1439);">Tiếng Việt</div><svg class="b" style="left:1014.70px;top:156.80px;" width="5.2" height="3.6" viewBox="0 0 5.2 3.6"><path d="M0.8 0.8L2.6 2.6l1.8-1.8" fill="none" stroke="#3a3f47" stroke-width="1.2"/></svg><div class="t" style="left:1037.89px;top:154.87px;font-size:8.9px;line-height:8.9px;color:#3a3f47;transform:scaleX(1.1449);">Chi nhánh trung tâm</div><svg class="b" style="left:1134.00px;top:156.80px;" width="5.2" height="3.6" viewBox="0 0 5.2 3.6"><path d="M0.8 0.8L2.6 2.6l1.8-1.8" fill="none" stroke="#3a3f47" stroke-width="1.2"/></svg><svg class="b" style="left:1154.00px;top:151.00px;" width="12" height="15" viewBox="0 0 12 15"><circle cx="5.8" cy="1.4" r="0.9" fill="#353a42"/><path d="M0.9 11.1 L1.8 9.8 V6.3 C1.8 3.7 3.5 2 5.8 2 C8.1 2 9.8 3.7 9.8 6.3 V9.8 L10.7 11.1 Z" fill="#353a42"/><path d="M4.3 12.4 A1.5 1.5 0 0 0 7.3 12.4 Z" fill="#353a42"/></svg><svg class="b" style="left:1179.20px;top:152.60px;" width="11" height="11.5" viewBox="0 0 11 11.5"><path d="M3.84 2.08 L4.22 0.61 L6.38 0.61 L6.76 2.08 L7.70 2.63 L9.16 2.22 L10.25 4.09 L9.16 5.16 L9.16 6.24 L10.25 7.31 L9.16 9.18 L7.70 8.77 L6.76 9.32 L6.38 10.79 L4.22 10.79 L3.84 9.32 L2.90 8.77 L1.44 9.18 L0.35 7.31 L1.44 6.24 L1.44 5.16 L0.35 4.09 L1.44 2.22 L2.90 2.63 Z" fill="#2f333a"/><circle cx="5.3" cy="5.7" r="1.7" fill="#fff"/></svg><div class="b" style="left:1197.50px;top:147.50px;width:21.50px;height:21.25px;background:#e3eefd;border-radius:6px"></div><svg class="b" style="left:1203.60px;top:152.00px;" width="10" height="12" viewBox="0 0 10 12"><circle cx="5" cy="3.4" r="2.9" fill="#0a6cf5"/><path d="M0.2 11.8 V9.6 C0.2 8.2 1.2 7.3 2.6 7.3 H7.4 C8.8 7.3 9.8 8.2 9.8 9.6 V11.8 Z" fill="#0a6cf5"/></svg><div class="t" style="left:155.50px;top:186.52px;font-size:9.9px;line-height:9.9px;color:#fff;font-weight:700;transform:scaleX(0.9760);">Tổng quan</div><div class="t" style="left:231.28px;top:186.52px;font-size:9.9px;line-height:9.9px;color:#fff;font-weight:700;transform:scaleX(0.9675);">Hàng hóa</div><div class="t" style="left:302.45px;top:186.52px;font-size:9.9px;line-height:9.9px;color:#fff;font-weight:700;transform:scaleX(0.9470);">Đơn hàng</div><div class="t" style="left:373.12px;top:186.52px;font-size:9.9px;line-height:9.9px;color:#fff;font-weight:700;transform:scaleX(0.9803);">Khách hàng</div><div class="t" style="left:454.36px;top:186.52px;font-size:9.9px;line-height:9.9px;color:#fff;font-weight:700;">Nhân viên</div><div class="t" style="left:528.47px;top:186.52px;font-size:9.9px;line-height:9.9px;color:#fff;font-weight:700;transform:scaleX(0.9427);">Sổ quỹ</div><div class="t" style="left:586.37px;top:186.52px;font-size:9.9px;line-height:9.9px;color:#fff;font-weight:700;transform:scaleX(0.9812);">Phân tích</div><div class="t" style="left:656.39px;top:186.52px;font-size:9.9px;line-height:9.9px;color:#fff;font-weight:700;transform:scaleX(0.9547);">Bán online</div><div class="b" style="left:718.00px;top:178.75px;width:96.75px;height:24.00px;background:#0a5bcc;border-radius:4px"></div><div class="t" style="left:731.91px;top:186.52px;font-size:9.9px;line-height:9.9px;color:#fff;font-weight:700;transform:scaleX(0.9594);">Thuế &amp; Kế toán</div><div class="b" style="left:1130.70px;top:178.75px;width:88.55px;height:24.25px;background:#fff;border-radius:5px"></div><svg class="b" style="left:1143.50px;top:184.50px;" width="14" height="13" viewBox="0 0 14 13"><path d="M0.9 1.3 Q1.9 0.8 2.5 1.8 L3.7 8.4" fill="none" stroke="#0070f4" stroke-width="1.3" stroke-linecap="round"/><path d="M2.8 2.3 H12.9 V3.2 L12.1 8 H3.7 Z" fill="#0070f4"/><path d="M3.7 8.6 H12" stroke="#0070f4" stroke-width="1.1"/><circle cx="5" cy="10.9" r="1.2" fill="#0070f4"/><circle cx="11.1" cy="10.9" r="1.2" fill="#0070f4"/></svg><div class="t" style="left:1163.38px;top:187.27px;font-size:8.9px;line-height:8.9px;color:#0070f4;font-weight:700;transform:scaleX(1.0665);">Bán hàng</div><svg class="b" style="left:153.00px;top:222.50px;" width="8" height="11" viewBox="0 0 8 11"><path d="M6.2 1.2L1.9 5.5 6.2 9.8" fill="none" stroke="#2b2f36" stroke-width="1.4"/></svg><div class="t" style="left:168.90px;top:216.33px;font-size:12.6px;line-height:12.6px;color:#111418;font-weight:700;transform:scaleX(1.0670);">Sổ hàng hóa</div><div class="t" style="left:168.99px;top:234.78px;font-size:9.0px;line-height:9.0px;color:#8a8f97;transform:scaleX(1.0084);">9999999902</div><div class="b" style="left:341.50px;top:218.25px;width:337.25px;height:20.75px;background:#fff;border:1px solid #e1e4e8;border-radius:5px;box-sizing:border-box"></div><svg class="b" style="left:346.00px;top:224.00px;" width="11" height="10" viewBox="0 0 11 10"><circle cx="4.5" cy="4.2" r="3.5" fill="none" stroke="#2b2f36" stroke-width="1.15"/><path d="M7.1 6.8l2.5 2.5" stroke="#2b2f36" stroke-width="1.3" stroke-linecap="round"/></svg><div class="t" style="left:365.20px;top:224.14px;font-size:9.4px;line-height:9.4px;color:#8d929a;transform:scaleX(1.0607);">Tìm kiếm theo số hiệu, diễn giải, mã giao dịch</div><div class="b" style="left:943.20px;top:218.00px;width:115.80px;height:21.70px;background:#fff;border:1px solid #5c9ef7;border-radius:5px;box-sizing:border-box"></div><svg class="b" style="left:952.50px;top:223.00px;" width="10" height="11" viewBox="0 0 10 11"><path d="M4.6 1.2V7M1.6 4.4L4.6 7.2 7.8 4.4" fill="none" stroke="#0070f4" stroke-width="1.3" stroke-linecap="round" stroke-linejoin="round"/><path d="M1 9.8H8.8" stroke="#5d9cf6" stroke-width="1.2" stroke-linecap="round"/></svg><div class="t" style="left:966.61px;top:225.03px;font-size:9.3px;line-height:9.3px;color:#0070f4;font-weight:700;transform:scaleX(1.0041);">Tải sổ và chứng từ</div><div class="b" style="left:1064.60px;top:218.00px;width:146.80px;height:21.70px;background:#fff;border:1px solid #dde0e4;border-radius:5px;box-sizing:border-box"></div><svg class="b" style="left:1072.50px;top:223.50px;" width="11.5" height="10.5" viewBox="0 0 11.5 10.5"><path d="M1.2 9.3 L1.6 7.2 L7.6 1.2 L9.7 3.3 L3.7 9.3 Z" fill="none" stroke="#3a3f47" stroke-width="1.1" stroke-linejoin="round"/><path d="M7.4 1.4 L8.3 0.6 Q8.9 0.1 9.5 0.7 L10.3 1.5 Q10.8 2.1 10.2 2.7 L9.5 3.5 Z" fill="#2b3038"/><path d="M6.4 9.4 H10.4" stroke="#8a8f96" stroke-width="1.1"/></svg><div class="t" style="left:1088.20px;top:225.03px;font-size:9.3px;line-height:9.3px;color:#33373d;font-weight:700;transform:scaleX(1.0266);">Thay đổi tồn kho ban đầu</div><div class="b" style="left:150.00px;top:250.50px;width:182.50px;height:491.10px;background:#fff;border-radius:6px"></div><div class="t" style="left:158.02px;top:267.48px;font-size:9.0px;line-height:9.0px;color:#1c2026;font-weight:700;transform:scaleX(1.0521);">Chọn hàng hóa</div><div class="b" style="left:158.00px;top:283.00px;width:166.60px;height:21.50px;background:#fff;border:1px solid #dfe2e6;border-radius:5px;box-sizing:border-box"></div><div class="t" style="left:166.19px;top:290.07px;font-size:9.6px;line-height:9.6px;color:#3a3f47;transform:scaleX(1.0603);">Bánh ngọt</div><svg class="b" style="left:306.50px;top:290.50px;" width="9" height="6" viewBox="0 0 9 6"><path d="M1 1l3.6 3.6L8.2 1" fill="none" stroke="#3a3f47" stroke-width="1.2"/></svg><div class="t" style="left:158.66px;top:321.48px;font-size:9.0px;line-height:9.0px;color:#1c2026;font-weight:700;transform:scaleX(1.0304);">Thời gian</div><div class="b" style="left:161.00px;top:342.60px;width:10.80px;height:10.80px;border:2.6px solid #0a6cf2;border-radius:50%;box-sizing:border-box;background:#fff"></div><div class="b" style="left:180.25px;top:337.25px;width:144.35px;height:20.85px;background:#fff;border:1px solid #dfe2e6;border-radius:5px;box-sizing:border-box"></div><div class="t" style="left:187.95px;top:344.07px;font-size:9.6px;line-height:9.6px;color:#3a3f47;transform:scaleX(1.0364);">Năm nay</div><svg class="b" style="left:306.50px;top:344.80px;" width="9" height="6" viewBox="0 0 9 6"><path d="M1 1l3.6 3.6L8.2 1" fill="none" stroke="#3a3f47" stroke-width="1.2"/></svg><div class="b" style="left:161.00px;top:369.00px;width:11.00px;height:11.00px;border:1px solid #8a8f97;border-radius:50%;box-sizing:border-box;background:#fff"></div><div class="b" style="left:180.25px;top:364.40px;width:144.35px;height:21.20px;background:#fff;border:1px solid #dfe2e6;border-radius:5px;box-sizing:border-box"></div><div class="t" style="left:187.80px;top:371.17px;font-size:9.6px;line-height:9.6px;color:#9da2a9;transform:scaleX(1.0343);">Tùy chỉnh</div><svg class="b" style="left:310.50px;top:369.30px;" width="11" height="11" viewBox="0 0 11 11"><rect x="1" y="1.7" width="9" height="8.6" rx="1.3" fill="none" stroke="#3a3f47" stroke-width="1.1"/><path d="M1 3.6h9" stroke="#3a3f47" stroke-width="1.8"/><path d="M3.4 0.6v1.6M7.6 0.6v1.6" stroke="#3a3f47" stroke-width="1"/><path d="M3.2 6.1h4.6M3.2 7.9h2.6" stroke="#3a3f47" stroke-width="0.8"/></svg><div class="b" style="left:341.00px;top:250.50px;width:870.30px;height:53.70px;background:#fff;border-radius:6px"></div><div class="t" style="left:690.50px;top:263.60px;font-size:9.1px;line-height:9.1px;color:#5d626a;transform:scaleX(1.1045);">Tồn đầu kỳ</div><div class="t" style="left:734.08px;top:282.86px;font-size:10.8px;line-height:10.8px;color:#15181d;font-weight:700;transform:scaleX(1.1000);">0</div><div class="t" style="left:827.38px;top:263.60px;font-size:9.1px;line-height:9.1px;color:#5d626a;transform:scaleX(1.1320);">Nhập trong kỳ</div><div class="t" style="left:830.42px;top:282.86px;font-size:10.8px;line-height:10.8px;color:#0070f4;font-weight:700;transform:scaleX(1.1392);">40,656,000</div><div class="t" style="left:983.04px;top:263.60px;font-size:9.1px;line-height:9.1px;color:#5d626a;transform:scaleX(1.1317);">Xuất trong kỳ</div><div class="t" style="left:990.00px;top:282.86px;font-size:10.8px;line-height:10.8px;color:#f5121f;font-weight:700;transform:scaleX(1.1276);">3,956,700</div><div class="t" style="left:1143.30px;top:263.60px;font-size:9.1px;line-height:9.1px;color:#5d626a;transform:scaleX(1.1151);">Tồn cuối kỳ</div><div class="t" style="left:1133.89px;top:282.86px;font-size:10.8px;line-height:10.8px;color:#13994a;font-weight:700;transform:scaleX(1.1433);">36,699,300</div><div class="b" style="left:341.00px;top:304.20px;width:870.30px;height:7.05px;background:#eff0f2"></div><div class="b" style="left:341.00px;top:311.25px;width:870.30px;height:430.35px;background:#fff;border-radius:6px"></div><div class="b" style="left:349px;top:311px;width:854.5px;height:380px;overflow:hidden"><div class="b" style="left:-349px;top:-311px;width:2000px;height:900px"><div class="b" style="left:128.00px;top:319.20px;width:1075.50px;height:33.40px;background:#e3effd;border-radius:5px 5px 0 0"></div><div class="b" style="left:128.00px;top:351.90px;width:1075.50px;height:1.00px;background:#d3e4fb"></div><div class="b" style="left:128.00px;top:335.80px;width:155.40px;height:0.80px;background:#d6e6fb"></div><div class="b" style="left:600.20px;top:335.80px;width:175.40px;height:0.80px;background:#d6e6fb"></div><div class="b" style="left:775.60px;top:335.80px;width:174.90px;height:0.80px;background:#d6e6fb"></div><div class="b" style="left:950.50px;top:335.80px;width:175.50px;height:0.80px;background:#d6e6fb"></div><div class="b" style="left:283.00px;top:319.20px;width:0.80px;height:33.40px;background:#d6e6fb"></div><div class="b" style="left:446.10px;top:319.20px;width:0.80px;height:33.40px;background:#d6e6fb"></div><div class="b" style="left:502.10px;top:319.20px;width:0.80px;height:33.40px;background:#d6e6fb"></div><div class="b" style="left:599.80px;top:319.20px;width:0.80px;height:33.40px;background:#d6e6fb"></div><div class="b" style="left:775.20px;top:319.20px;width:0.80px;height:33.40px;background:#d6e6fb"></div><div class="b" style="left:950.10px;top:319.20px;width:0.80px;height:33.40px;background:#d6e6fb"></div><div class="b" style="left:1125.60px;top:319.20px;width:0.80px;height:33.40px;background:#d6e6fb"></div><div class="b" style="left:204.85px;top:336.00px;width:0.80px;height:16.60px;background:#d6e6fb"></div><div class="b" style="left:676.90px;top:336.00px;width:0.80px;height:16.60px;background:#d6e6fb"></div><div class="b" style="left:852.00px;top:336.00px;width:0.80px;height:16.60px;background:#d6e6fb"></div><div class="b" style="left:1027.50px;top:336.00px;width:0.80px;height:16.60px;background:#d6e6fb"></div><div class="t" style="left:187.28px;top:324.26px;font-size:8.2px;line-height:8.2px;color:#2c3037;font-weight:700;transform:scaleX(0.9649);">Chứng từ</div><div class="t" style="left:147.13px;top:341.26px;font-size:8.2px;line-height:8.2px;color:#2c3037;font-weight:700;transform:scaleX(0.9888);">Số hiệu</div><svg class="b" style="left:178.88px;top:341.10px;" width="7" height="7" viewBox="0 0 7 7"><circle cx="3.5" cy="3.5" r="3" fill="none" stroke="#a9adb3" stroke-width="0.75"/><path d="M3.5 3.1v2.1" stroke="#a9adb3" stroke-width="0.8"/><circle cx="3.5" cy="2" r="0.45" fill="#a9adb3"/></svg><div class="t" style="left:220.37px;top:341.26px;font-size:8.2px;line-height:8.2px;color:#2c3037;font-weight:700;transform:scaleX(1.0339);">Ngày, tháng</div><div class="t" style="left:291.25px;top:333.16px;font-size:8.2px;line-height:8.2px;color:#2c3037;font-weight:700;transform:scaleX(1.0276);">Diễn giải</div><div class="t" style="left:454.56px;top:333.16px;font-size:8.2px;line-height:8.2px;color:#2c3037;font-weight:700;transform:scaleX(0.9645);">Đơn vị</div><div class="t" style="left:561.96px;top:333.16px;font-size:8.2px;line-height:8.2px;color:#2c3037;font-weight:700;transform:scaleX(0.9555);">Đơn giá</div><div class="t" style="left:677.04px;top:324.26px;font-size:8.2px;line-height:8.2px;color:#2c3037;font-weight:700;transform:scaleX(1.0489);">Nhập</div><div class="t" style="left:616.42px;top:341.26px;font-size:8.2px;line-height:8.2px;color:#2c3037;font-weight:700;transform:scaleX(0.9490);">Số lượng</div><svg class="b" style="left:653.85px;top:341.10px;" width="7" height="7" viewBox="0 0 7 7"><circle cx="3.5" cy="3.5" r="3" fill="none" stroke="#a9adb3" stroke-width="0.75"/><path d="M3.5 3.1v2.1" stroke="#a9adb3" stroke-width="0.8"/><circle cx="3.5" cy="2" r="0.45" fill="#a9adb3"/></svg><div class="t" style="left:701.12px;top:341.26px;font-size:8.2px;line-height:8.2px;color:#2c3037;font-weight:700;transform:scaleX(0.9908);">Thành tiền</div><svg class="b" style="left:744.70px;top:341.10px;" width="7" height="7" viewBox="0 0 7 7"><circle cx="3.5" cy="3.5" r="3" fill="none" stroke="#a9adb3" stroke-width="0.75"/><path d="M3.5 3.1v2.1" stroke="#a9adb3" stroke-width="0.8"/><circle cx="3.5" cy="2" r="0.45" fill="#a9adb3"/></svg><div class="t" style="left:854.12px;top:324.26px;font-size:8.2px;line-height:8.2px;color:#2c3037;font-weight:700;transform:scaleX(1.0063);">Xuất</div><div class="t" style="left:791.67px;top:341.26px;font-size:8.2px;line-height:8.2px;color:#2c3037;font-weight:700;transform:scaleX(0.9490);">Số lượng</div><svg class="b" style="left:829.10px;top:341.10px;" width="7" height="7" viewBox="0 0 7 7"><circle cx="3.5" cy="3.5" r="3" fill="none" stroke="#a9adb3" stroke-width="0.75"/><path d="M3.5 3.1v2.1" stroke="#a9adb3" stroke-width="0.8"/><circle cx="3.5" cy="2" r="0.45" fill="#a9adb3"/></svg><div class="t" style="left:876.12px;top:341.26px;font-size:8.2px;line-height:8.2px;color:#2c3037;font-weight:700;transform:scaleX(0.9908);">Thành tiền</div><svg class="b" style="left:919.70px;top:341.10px;" width="7" height="7" viewBox="0 0 7 7"><circle cx="3.5" cy="3.5" r="3" fill="none" stroke="#a9adb3" stroke-width="0.75"/><path d="M3.5 3.1v2.1" stroke="#a9adb3" stroke-width="0.8"/><circle cx="3.5" cy="2" r="0.45" fill="#a9adb3"/></svg><div class="t" style="left:1030.61px;top:324.26px;font-size:8.2px;line-height:8.2px;color:#2c3037;font-weight:700;transform:scaleX(1.0463);">Tồn</div><div class="t" style="left:984.26px;top:341.26px;font-size:8.2px;line-height:8.2px;color:#2c3037;font-weight:700;transform:scaleX(0.9628);">Số lượng</div><div class="t" style="left:1076.02px;top:341.26px;font-size:8.2px;line-height:8.2px;color:#2c3037;font-weight:700;transform:scaleX(1.0079);">Thành tiền</div><div class="t" style="left:1134.46px;top:333.16px;font-size:8.2px;line-height:8.2px;color:#2c3037;font-weight:700;transform:scaleX(1.0180);">Mã giao dịch</div><svg class="b" style="left:1187.50px;top:333.00px;" width="7" height="7" viewBox="0 0 7 7"><circle cx="3.5" cy="3.5" r="3" fill="none" stroke="#a9adb3" stroke-width="0.75"/><path d="M3.5 3.1v2.1" stroke="#a9adb3" stroke-width="0.8"/><circle cx="3.5" cy="2" r="0.45" fill="#a9adb3"/></svg><div class="t" style="left:141.56px;top:368.50px;font-size:9.8px;line-height:9.8px;color:#2e3238;transform:scaleX(1.0700);">NK000034</div><div class="t" style="left:217.90px;top:368.50px;font-size:9.8px;line-height:9.8px;color:#2e3238;transform:scaleX(1.0700);">12/10/2025</div><div class="t" style="left:291.30px;top:368.50px;font-size:9.8px;line-height:9.8px;color:#2e3238;transform:scaleX(1.0200);">Nhập kho thành phẩm sản xuất</div><div class="t" style="left:454.55px;top:368.50px;font-size:9.8px;line-height:9.8px;color:#2e3238;transform:scaleX(1.0200);">Đơn vị</div><div class="t" style="left:560.48px;top:368.50px;font-size:9.8px;line-height:9.8px;color:#2e3238;transform:scaleX(1.0700);">36,300</div><div class="t" style="left:657.93px;top:368.50px;font-size:9.8px;line-height:9.8px;color:#2e3238;transform:scaleX(1.0700);">20</div><div class="t" style="left:729.96px;top:368.50px;font-size:9.8px;line-height:9.8px;color:#2e3238;transform:scaleX(1.0700);">726,000</div><div class="t" style="left:994.24px;top:368.50px;font-size:9.8px;line-height:9.8px;color:#2e3238;transform:scaleX(1.0700);">1,011</div><div class="t" style="left:1065.18px;top:368.50px;font-size:9.8px;line-height:9.8px;color:#2e3238;transform:scaleX(1.0700);">36,699,300</div><div class="t" style="left:1141.87px;top:368.50px;font-size:9.8px;line-height:9.8px;color:#2e3238;">SX000001</div><div class="b" style="left:128.00px;top:390.40px;width:1075.50px;height:1.00px;background:#eceef1"></div><div class="t" style="left:142.27px;top:406.50px;font-size:9.8px;line-height:9.8px;color:#2e3238;transform:scaleX(1.0700);">XK000197</div><div class="t" style="left:217.90px;top:406.50px;font-size:9.8px;line-height:9.8px;color:#2e3238;transform:scaleX(1.0700);">12/10/2025</div><div class="t" style="left:291.85px;top:406.50px;font-size:9.8px;line-height:9.8px;color:#2e3238;transform:scaleX(1.0200);">Xuất kho bán hàng</div><div class="t" style="left:454.55px;top:406.50px;font-size:9.8px;line-height:9.8px;color:#2e3238;transform:scaleX(1.0200);">Đơn vị</div><div class="t" style="left:560.48px;top:406.50px;font-size:9.8px;line-height:9.8px;color:#2e3238;transform:scaleX(1.0700);">36,300</div><div class="t" style="left:839.44px;top:406.50px;font-size:9.8px;line-height:9.8px;color:#2e3238;transform:scaleX(1.0700);">4</div><div class="t" style="left:905.46px;top:406.50px;font-size:9.8px;line-height:9.8px;color:#2e3238;transform:scaleX(1.0700);">145,200</div><div class="t" style="left:1002.21px;top:406.50px;font-size:9.8px;line-height:9.8px;color:#2e3238;transform:scaleX(1.0700);">991</div><div class="t" style="left:1065.18px;top:406.50px;font-size:9.8px;line-height:9.8px;color:#2e3238;transform:scaleX(1.0700);">35,973,300</div><div class="t" style="left:1141.18px;top:406.50px;font-size:9.8px;line-height:9.8px;color:#2e3238;">HD000017</div><div class="b" style="left:128.00px;top:428.40px;width:1075.50px;height:1.00px;background:#eceef1"></div><div class="t" style="left:142.27px;top:444.50px;font-size:9.8px;line-height:9.8px;color:#2e3238;transform:scaleX(1.0700);">XK000187</div><div class="t" style="left:217.90px;top:444.50px;font-size:9.8px;line-height:9.8px;color:#2e3238;transform:scaleX(1.0700);">10/10/2025</div><div class="t" style="left:291.85px;top:444.50px;font-size:9.8px;line-height:9.8px;color:#2e3238;transform:scaleX(1.0200);">Xuất kho bán hàng</div><div class="t" style="left:454.55px;top:444.50px;font-size:9.8px;line-height:9.8px;color:#2e3238;transform:scaleX(1.0200);">Đơn vị</div><div class="t" style="left:560.48px;top:444.50px;font-size:9.8px;line-height:9.8px;color:#2e3238;transform:scaleX(1.0700);">36,300</div><div class="t" style="left:839.70px;top:444.50px;font-size:9.8px;line-height:9.8px;color:#2e3238;transform:scaleX(1.0700);">2</div><div class="t" style="left:911.28px;top:444.50px;font-size:9.8px;line-height:9.8px;color:#2e3238;transform:scaleX(1.0700);">72,600</div><div class="t" style="left:1002.16px;top:444.50px;font-size:9.8px;line-height:9.8px;color:#2e3238;transform:scaleX(1.0700);">995</div><div class="t" style="left:1065.97px;top:444.50px;font-size:9.8px;line-height:9.8px;color:#2e3238;transform:scaleX(1.0700);">36,118,500</div><div class="t" style="left:1141.13px;top:444.50px;font-size:9.8px;line-height:9.8px;color:#2e3238;">HD000016</div><div class="b" style="left:128.00px;top:466.40px;width:1075.50px;height:1.00px;background:#eceef1"></div><div class="t" style="left:142.22px;top:482.50px;font-size:9.8px;line-height:9.8px;color:#2e3238;transform:scaleX(1.0700);">XK000193</div><div class="t" style="left:218.08px;top:482.50px;font-size:9.8px;line-height:9.8px;color:#2e3238;transform:scaleX(1.0700);">09/10/2025</div><div class="t" style="left:291.85px;top:482.50px;font-size:9.8px;line-height:9.8px;color:#2e3238;transform:scaleX(1.0200);">Xuất kho bán hàng</div><div class="t" style="left:454.55px;top:482.50px;font-size:9.8px;line-height:9.8px;color:#2e3238;transform:scaleX(1.0200);">Đơn vị</div><div class="t" style="left:560.48px;top:482.50px;font-size:9.8px;line-height:9.8px;color:#2e3238;transform:scaleX(1.0700);">36,300</div><div class="t" style="left:839.60px;top:482.50px;font-size:9.8px;line-height:9.8px;color:#2e3238;transform:scaleX(1.0700);">3</div><div class="t" style="left:905.46px;top:482.50px;font-size:9.8px;line-height:9.8px;color:#2e3238;transform:scaleX(1.0700);">108,900</div><div class="t" style="left:1002.27px;top:482.50px;font-size:9.8px;line-height:9.8px;color:#2e3238;transform:scaleX(1.0700);">997</div><div class="t" style="left:1065.18px;top:482.50px;font-size:9.8px;line-height:9.8px;color:#2e3238;transform:scaleX(1.0700);">36,191,100</div><div class="t" style="left:1141.13px;top:482.50px;font-size:9.8px;line-height:9.8px;color:#2e3238;">HD000015</div><div class="b" style="left:128.00px;top:504.40px;width:1075.50px;height:1.00px;background:#eceef1"></div><div class="t" style="left:142.14px;top:520.50px;font-size:9.8px;line-height:9.8px;color:#2e3238;transform:scaleX(1.0700);">XK000214</div><div class="t" style="left:217.90px;top:520.50px;font-size:9.8px;line-height:9.8px;color:#2e3238;transform:scaleX(1.0700);">18/09/2025</div><div class="t" style="left:291.85px;top:520.50px;font-size:9.8px;line-height:9.8px;color:#2e3238;transform:scaleX(1.0200);">Xuất kho bán hàng</div><div class="t" style="left:454.55px;top:520.50px;font-size:9.8px;line-height:9.8px;color:#2e3238;transform:scaleX(1.0200);">Đơn vị</div><div class="t" style="left:560.48px;top:520.50px;font-size:9.8px;line-height:9.8px;color:#2e3238;transform:scaleX(1.0700);">36,300</div><div class="t" style="left:833.73px;top:520.50px;font-size:9.8px;line-height:9.8px;color:#2e3238;transform:scaleX(1.0700);">50</div><div class="t" style="left:896.70px;top:520.50px;font-size:9.8px;line-height:9.8px;color:#2e3238;transform:scaleX(1.0700);">1,815,000</div><div class="t" style="left:993.35px;top:520.50px;font-size:9.8px;line-height:9.8px;color:#2e3238;transform:scaleX(1.0700);">1,000</div><div class="t" style="left:1065.18px;top:520.50px;font-size:9.8px;line-height:9.8px;color:#2e3238;transform:scaleX(1.0700);">36,300,000</div><div class="t" style="left:1136.46px;top:513.70px;font-size:9.8px;line-height:9.8px;color:#2e3238;transform:scaleX(1.0200);">HD000040.0</div><div class="t" style="left:1161.83px;top:526.50px;font-size:9.8px;line-height:9.8px;color:#2e3238;transform:scaleX(1.0200);">1</div><div class="b" style="left:128.00px;top:542.40px;width:1075.50px;height:1.00px;background:#eceef1"></div><div class="t" style="left:142.25px;top:558.50px;font-size:9.8px;line-height:9.8px;color:#2e3238;transform:scaleX(1.0700);">XK000171</div><div class="t" style="left:217.90px;top:558.50px;font-size:9.8px;line-height:9.8px;color:#2e3238;transform:scaleX(1.0700);">15/08/2025</div><div class="t" style="left:291.85px;top:558.50px;font-size:9.8px;line-height:9.8px;color:#2e3238;transform:scaleX(1.0200);">Xuất kho bán hàng</div><div class="t" style="left:454.55px;top:558.50px;font-size:9.8px;line-height:9.8px;color:#2e3238;transform:scaleX(1.0200);">Đơn vị</div><div class="t" style="left:560.48px;top:558.50px;font-size:9.8px;line-height:9.8px;color:#2e3238;transform:scaleX(1.0700);">36,300</div><div class="t" style="left:833.73px;top:558.50px;font-size:9.8px;line-height:9.8px;color:#2e3238;transform:scaleX(1.0700);">50</div><div class="t" style="left:896.70px;top:558.50px;font-size:9.8px;line-height:9.8px;color:#2e3238;transform:scaleX(1.0700);">1,815,000</div><div class="t" style="left:993.35px;top:558.50px;font-size:9.8px;line-height:9.8px;color:#2e3238;transform:scaleX(1.0700);">1,050</div><div class="t" style="left:1065.97px;top:558.50px;font-size:9.8px;line-height:9.8px;color:#2e3238;transform:scaleX(1.0700);">38,115,000</div><div class="t" style="left:1141.11px;top:558.50px;font-size:9.8px;line-height:9.8px;color:#2e3238;">HD000040</div><div class="b" style="left:128.00px;top:580.40px;width:1075.50px;height:1.00px;background:#eceef1"></div><div class="t" style="left:141.62px;top:596.50px;font-size:9.8px;line-height:9.8px;color:#2e3238;transform:scaleX(1.0700);">NK000040</div><div class="t" style="left:218.08px;top:596.50px;font-size:9.8px;line-height:9.8px;color:#2e3238;transform:scaleX(1.0700);">30/06/2025</div><div class="t" style="left:291.30px;top:596.50px;font-size:9.8px;line-height:9.8px;color:#2e3238;transform:scaleX(1.0200);">Nhập hàng từ nhà cung cấp</div><div class="t" style="left:454.55px;top:596.50px;font-size:9.8px;line-height:9.8px;color:#2e3238;transform:scaleX(1.0200);">Đơn vị</div><div class="t" style="left:560.48px;top:596.50px;font-size:9.8px;line-height:9.8px;color:#2e3238;transform:scaleX(1.0700);">36,300</div><div class="t" style="left:652.11px;top:596.50px;font-size:9.8px;line-height:9.8px;color:#2e3238;transform:scaleX(1.0700);">100</div><div class="t" style="left:721.20px;top:596.50px;font-size:9.8px;line-height:9.8px;color:#2e3238;transform:scaleX(1.0700);">3,630,000</div><div class="t" style="left:993.35px;top:596.50px;font-size:9.8px;line-height:9.8px;color:#2e3238;transform:scaleX(1.0700);">1,100</div><div class="t" style="left:1065.18px;top:596.50px;font-size:9.8px;line-height:9.8px;color:#2e3238;transform:scaleX(1.0700);">39,930,000</div><div class="t" style="left:1141.45px;top:596.50px;font-size:9.8px;line-height:9.8px;color:#2e3238;">PN000012</div><div class="b" style="left:128.00px;top:618.40px;width:1075.50px;height:1.00px;background:#eceef1"></div><div class="t" style="left:141.64px;top:634.50px;font-size:9.8px;line-height:9.8px;color:#2e3238;transform:scaleX(1.0700);">NK000036</div><div class="t" style="left:218.08px;top:634.50px;font-size:9.8px;line-height:9.8px;color:#2e3238;transform:scaleX(1.0700);">01/06/2025</div><div class="t" style="left:291.30px;top:634.50px;font-size:9.8px;line-height:9.8px;color:#2e3238;transform:scaleX(1.0200);">Nhập hàng từ nhà cung cấp</div><div class="t" style="left:454.55px;top:634.50px;font-size:9.8px;line-height:9.8px;color:#2e3238;transform:scaleX(1.0200);">Đơn vị</div><div class="t" style="left:560.48px;top:634.50px;font-size:9.8px;line-height:9.8px;color:#2e3238;transform:scaleX(1.0700);">36,300</div><div class="t" style="left:643.35px;top:634.50px;font-size:9.8px;line-height:9.8px;color:#2e3238;transform:scaleX(1.0700);">1,000</div><div class="t" style="left:715.38px;top:634.50px;font-size:9.8px;line-height:9.8px;color:#2e3238;transform:scaleX(1.0700);">36,300,000</div><div class="t" style="left:993.35px;top:634.50px;font-size:9.8px;line-height:9.8px;color:#2e3238;transform:scaleX(1.0700);">1,000</div><div class="t" style="left:1065.18px;top:634.50px;font-size:9.8px;line-height:9.8px;color:#2e3238;transform:scaleX(1.0700);">36,300,000</div><div class="t" style="left:1141.33px;top:634.50px;font-size:9.8px;line-height:9.8px;color:#2e3238;">PN000014</div><div class="b" style="left:128.00px;top:656.40px;width:1075.50px;height:1.00px;background:#eceef1"></div></div></div><svg class="b" style="left:351.00px;top:707.60px;" width="5" height="6" viewBox="0 0 5 6"><path d="M4.6 0.3v5.4L0.3 3z" fill="#dfe2e6"/></svg><svg class="b" style="left:1196.50px;top:707.60px;" width="5" height="6" viewBox="0 0 5 6"><path d="M0.4 0.3v5.4L4.7 3z" fill="#dfe2e6"/></svg><div class="b" style="left:531.00px;top:708.00px;width:662.00px;height:4.40px;background:#e4e6ea;border-radius:2.2px"></div><div class="t" style="left:355.50px;top:720.95px;font-size:8.8px;line-height:8.8px;color:#4a4f57;font-weight:700;transform:scaleX(0.9507);">1-8 trong 8</div><svg class="b" style="left:415.00px;top:720.50px;" width="6" height="9" viewBox="0 0 6 9"><path d="M4.5 1L1.2 4.5 4.5 8" fill="none" stroke="#c3c7cd" stroke-width="1"/></svg><svg class="b" style="left:432.60px;top:720.50px;" width="6" height="9" viewBox="0 0 6 9"><path d="M1.5 1l3.3 3.5L1.5 8" fill="none" stroke="#c3c7cd" stroke-width="1"/></svg><svg class="b" style="left:324.00px;top:495.50px;" width="23" height="23" viewBox="0 0 23 23"><circle cx="11.4" cy="11.2" r="10.7" fill="#fff" fill-opacity="0.55" stroke="#a6cbfa" stroke-width="1.1"/><path d="M13.8 6L7.6 11.3 13.8 16.7" fill="none" stroke="#79b0f8" stroke-width="1.3"/></svg><div class="b" style="left:1240.50px;top:733.20px;width:81.00px;height:21.60px;background:#0070f4;border-radius:5px"></div><svg class="b" style="left:1248.50px;top:738.00px;" width="12" height="12" viewBox="0 0 12 12"><path d="M6.2 1.3 C9.1 1.3 11.3 3.2 11.3 5.6 C11.3 8 9.1 9.9 6.2 9.9 C5.4 9.9 4.6 9.8 3.9 9.5 L1.1 10.6 L1.9 8.3 C1.3 7.6 1.1 6.6 1.1 5.6 C1.1 3.2 3.3 1.3 6.2 1.3 Z" fill="none" stroke="#fff" stroke-width="1.25" stroke-linejoin="round"/><circle cx="4.2" cy="5.8" r="0.65" fill="#fff"/><circle cx="6.2" cy="5.8" r="0.65" fill="#fff"/><circle cx="8.2" cy="5.8" r="0.65" fill="#fff"/></svg><div class="t" style="left:1264.39px;top:741.20px;font-size:10.4px;line-height:10.4px;color:#fff;font-weight:700;transform:scaleX(0.9834);">1900 6522</div></div></div><div class="b" style="left:1184px;top:755.7px;width:381px;height:1.3px;background:#fff"></div><div class="b" style="left:1183px;top:141px;width:382px;height:614px;border:2px solid #b3b3b3;border-left:1px solid #767676"></div><svg class="b" style="left:1130px;top:445px;overflow:visible" width="100" height="50" viewBox="0 0 100 50"><defs><filter id="sh" x="-20%" y="-50%" width="140%" height="200%"><feGaussianBlur in="SourceAlpha" stdDeviation="1.8"/><feOffset dx="1" dy="3" result="o"/><feComponentTransfer><feFuncA type="linear" slope="0.55"/></feComponentTransfer><feMerge><feMergeNode/><feMergeNode in="SourceGraphic"/></feMerge></filter></defs><g filter="url(#sh)"><path d="M15.7 18.3 L63.4 18.9 L63.4 10.6 L87.8 23.4 L63.4 34.7 L63.4 25.8 L15.7 25.6 A3.7 3.7 0 0 1 15.7 18.3 Z" fill="#5546e6"/></g></svg></body></html>
